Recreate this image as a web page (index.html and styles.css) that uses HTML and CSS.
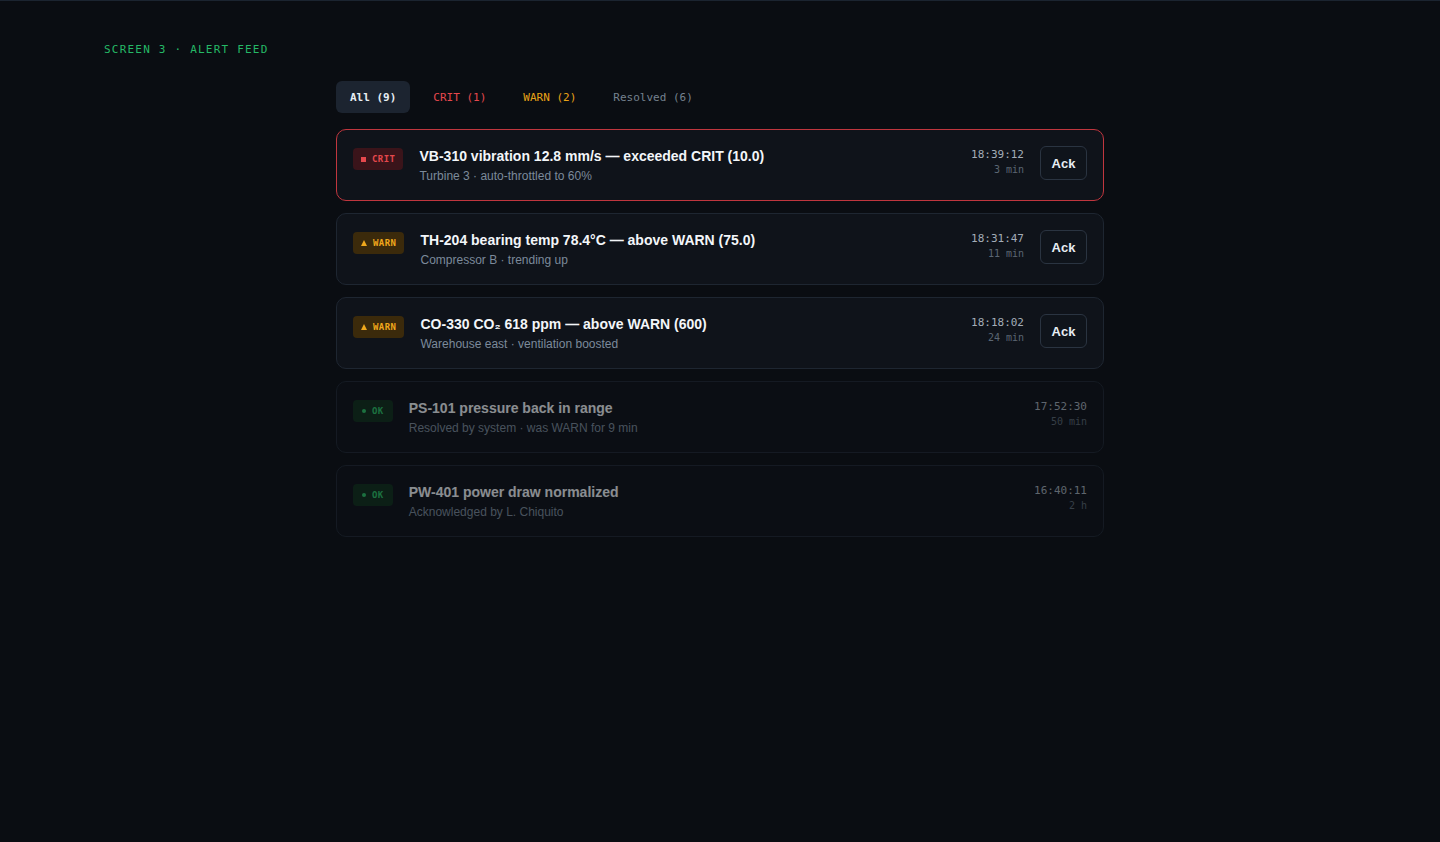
FILE: index.html
```html
<!DOCTYPE html>
<html lang="en">
<head>
<meta charset="utf-8">
<title>Alert Feed</title>
<link rel="stylesheet" href="styles.css">
</head>
<body>
<div class="page">
  <div class="screen-label">SCREEN 3 · ALERT FEED</div>
  <main class="feed">
    <nav class="tabs">
      <button class="tab tab-active">All (9)</button>
      <button class="tab tab-crit">CRIT (1)</button>
      <button class="tab tab-warn">WARN (2)</button>
      <button class="tab tab-res">Resolved (6)</button>
    </nav>
    <ul class="alerts">
      <li class="alert alert-crit">
        <span class="badge badge-crit"><span class="ico ico-square"></span>CRIT</span>
        <div class="alert-body">
          <div class="alert-title">VB-310 vibration 12.8 mm/s — exceeded CRIT (10.0)</div>
          <div class="alert-sub">Turbine 3 · auto-throttled to 60%</div>
        </div>
        <div class="alert-time"><div class="clock">18:39:12</div><div class="ago">3 min</div></div>
        <button class="ack">Ack</button>
      </li>
      <li class="alert">
        <span class="badge badge-warn"><span class="ico ico-tri"></span>WARN</span>
        <div class="alert-body">
          <div class="alert-title">TH-204 bearing temp 78.4°C — above WARN (75.0)</div>
          <div class="alert-sub">Compressor B · trending up</div>
        </div>
        <div class="alert-time"><div class="clock">18:31:47</div><div class="ago">11 min</div></div>
        <button class="ack">Ack</button>
      </li>
      <li class="alert">
        <span class="badge badge-warn"><span class="ico ico-tri"></span>WARN</span>
        <div class="alert-body">
          <div class="alert-title">CO-330 CO₂ 618 ppm — above WARN (600)</div>
          <div class="alert-sub">Warehouse east · ventilation boosted</div>
        </div>
        <div class="alert-time"><div class="clock">18:18:02</div><div class="ago">24 min</div></div>
        <button class="ack">Ack</button>
      </li>
      <li class="alert alert-resolved">
        <span class="badge badge-ok"><span class="ico ico-dot"></span>OK</span>
        <div class="alert-body">
          <div class="alert-title">PS-101 pressure back in range</div>
          <div class="alert-sub">Resolved by system · was WARN for 9 min</div>
        </div>
        <div class="alert-time"><div class="clock">17:52:30</div><div class="ago">50 min</div></div>
      </li>
      <li class="alert alert-resolved">
        <span class="badge badge-ok"><span class="ico ico-dot"></span>OK</span>
        <div class="alert-body">
          <div class="alert-title">PW-401 power draw normalized</div>
          <div class="alert-sub">Acknowledged by L. Chiquito</div>
        </div>
        <div class="alert-time"><div class="clock">16:40:11</div><div class="ago">2 h</div></div>
      </li>
    </ul>
  </main>
</div>
</body>
</html>
```
FILE: styles.css
```css
* { box-sizing: border-box; }
html, body { margin: 0; padding: 0; }
body {
  background: #0a0d12;
  border-top: 1px solid #1b2430;
  min-height: 842px;
  font-family: "Liberation Sans", Arial, sans-serif;
  color: #e6edf3;
}
.page {
  padding: 41px 104px 40px;
}
.screen-label {
  font-family: "DejaVu Sans Mono", monospace;
  font-size: 11px;
  line-height: 16px;
  letter-spacing: 0.11em;
  color: #25b866;
}
.feed {
  width: 768px;
  margin: 23px auto 0;
}
.tabs {
  display: flex;
  gap: 9px;
}
.tab {
  font-family: "DejaVu Sans Mono", monospace;
  font-size: 11px;
  line-height: 16px;
  padding: 9px 14px 7px;
  border: 0;
  border-radius: 6px;
  background: transparent;
  cursor: pointer;
}
.tab-active { background: #1c2430; color: #e6edf3; font-weight: bold; }
.tab-crit { color: #e5484d; }
.tab-warn { color: #e8a317; }
.tab-res { color: #75828f; }

.alerts {
  list-style: none;
  margin: 16px 0 0;
  padding: 0;
  display: flex;
  flex-direction: column;
  gap: 12px;
}
.alert {
  display: flex;
  align-items: flex-start;
  gap: 16px;
  padding: 16px;
  background: #0f131a;
  border: 1px solid #1e2631;
  border-radius: 10px;
}
.alert-crit { border-color: #c0363e; }
.alert-resolved { opacity: 0.55; background: #0c1016; }

.badge {
  flex: none;
  display: inline-flex;
  align-items: center;
  gap: 6px;
  height: 22px;
  margin-top: 2px;
  padding: 0 8px;
  border-radius: 4px;
  font-family: "DejaVu Sans Mono", monospace;
  font-size: 9px;
  font-weight: bold;
  letter-spacing: 0.05em;
}
.badge-crit { background: #3a141a; color: #e5484d; }
.badge-warn { background: #3b2a0b; color: #f0a81c; }
.badge-ok { background: #0f2e1b; color: #2bc466; padding: 0 9px; }

.ico { display: inline-block; flex: none; }
.ico-square { width: 5px; height: 5px; background: #e5484d; }
.ico-tri {
  width: 0; height: 0;
  border-left: 3px solid transparent;
  border-right: 3px solid transparent;
  border-bottom: 6px solid #f0a81c;
}
.ico-dot { width: 4px; height: 4px; border-radius: 50%; background: #2bc466; }

.alert-body { flex: 1; min-width: 0; }
.alert-title {
  font-size: 14px;
  line-height: 20px;
  font-weight: bold;
  color: #f3f6f9;
}
.alert-sub {
  margin-top: 2px;
  font-size: 12px;
  line-height: 16px;
  color: #7c8a9a;
}
.alert-time {
  flex: none;
  padding-top: 1px;
  text-align: right;
  font-family: "DejaVu Sans Mono", monospace;
  line-height: 15px;
}
.clock { font-size: 11px; color: #a3adb8; }
.ago { font-size: 10px; color: #5b6673; }

.ack {
  flex: none;
  width: 47px;
  height: 34px;
  padding: 0;
  background: #0f141b;
  border: 1px solid #2a3441;
  border-radius: 6px;
  color: #e6edf3;
  font-family: "Liberation Sans", Arial, sans-serif;
  font-size: 13px;
  font-weight: bold;
  cursor: pointer;
}
```
